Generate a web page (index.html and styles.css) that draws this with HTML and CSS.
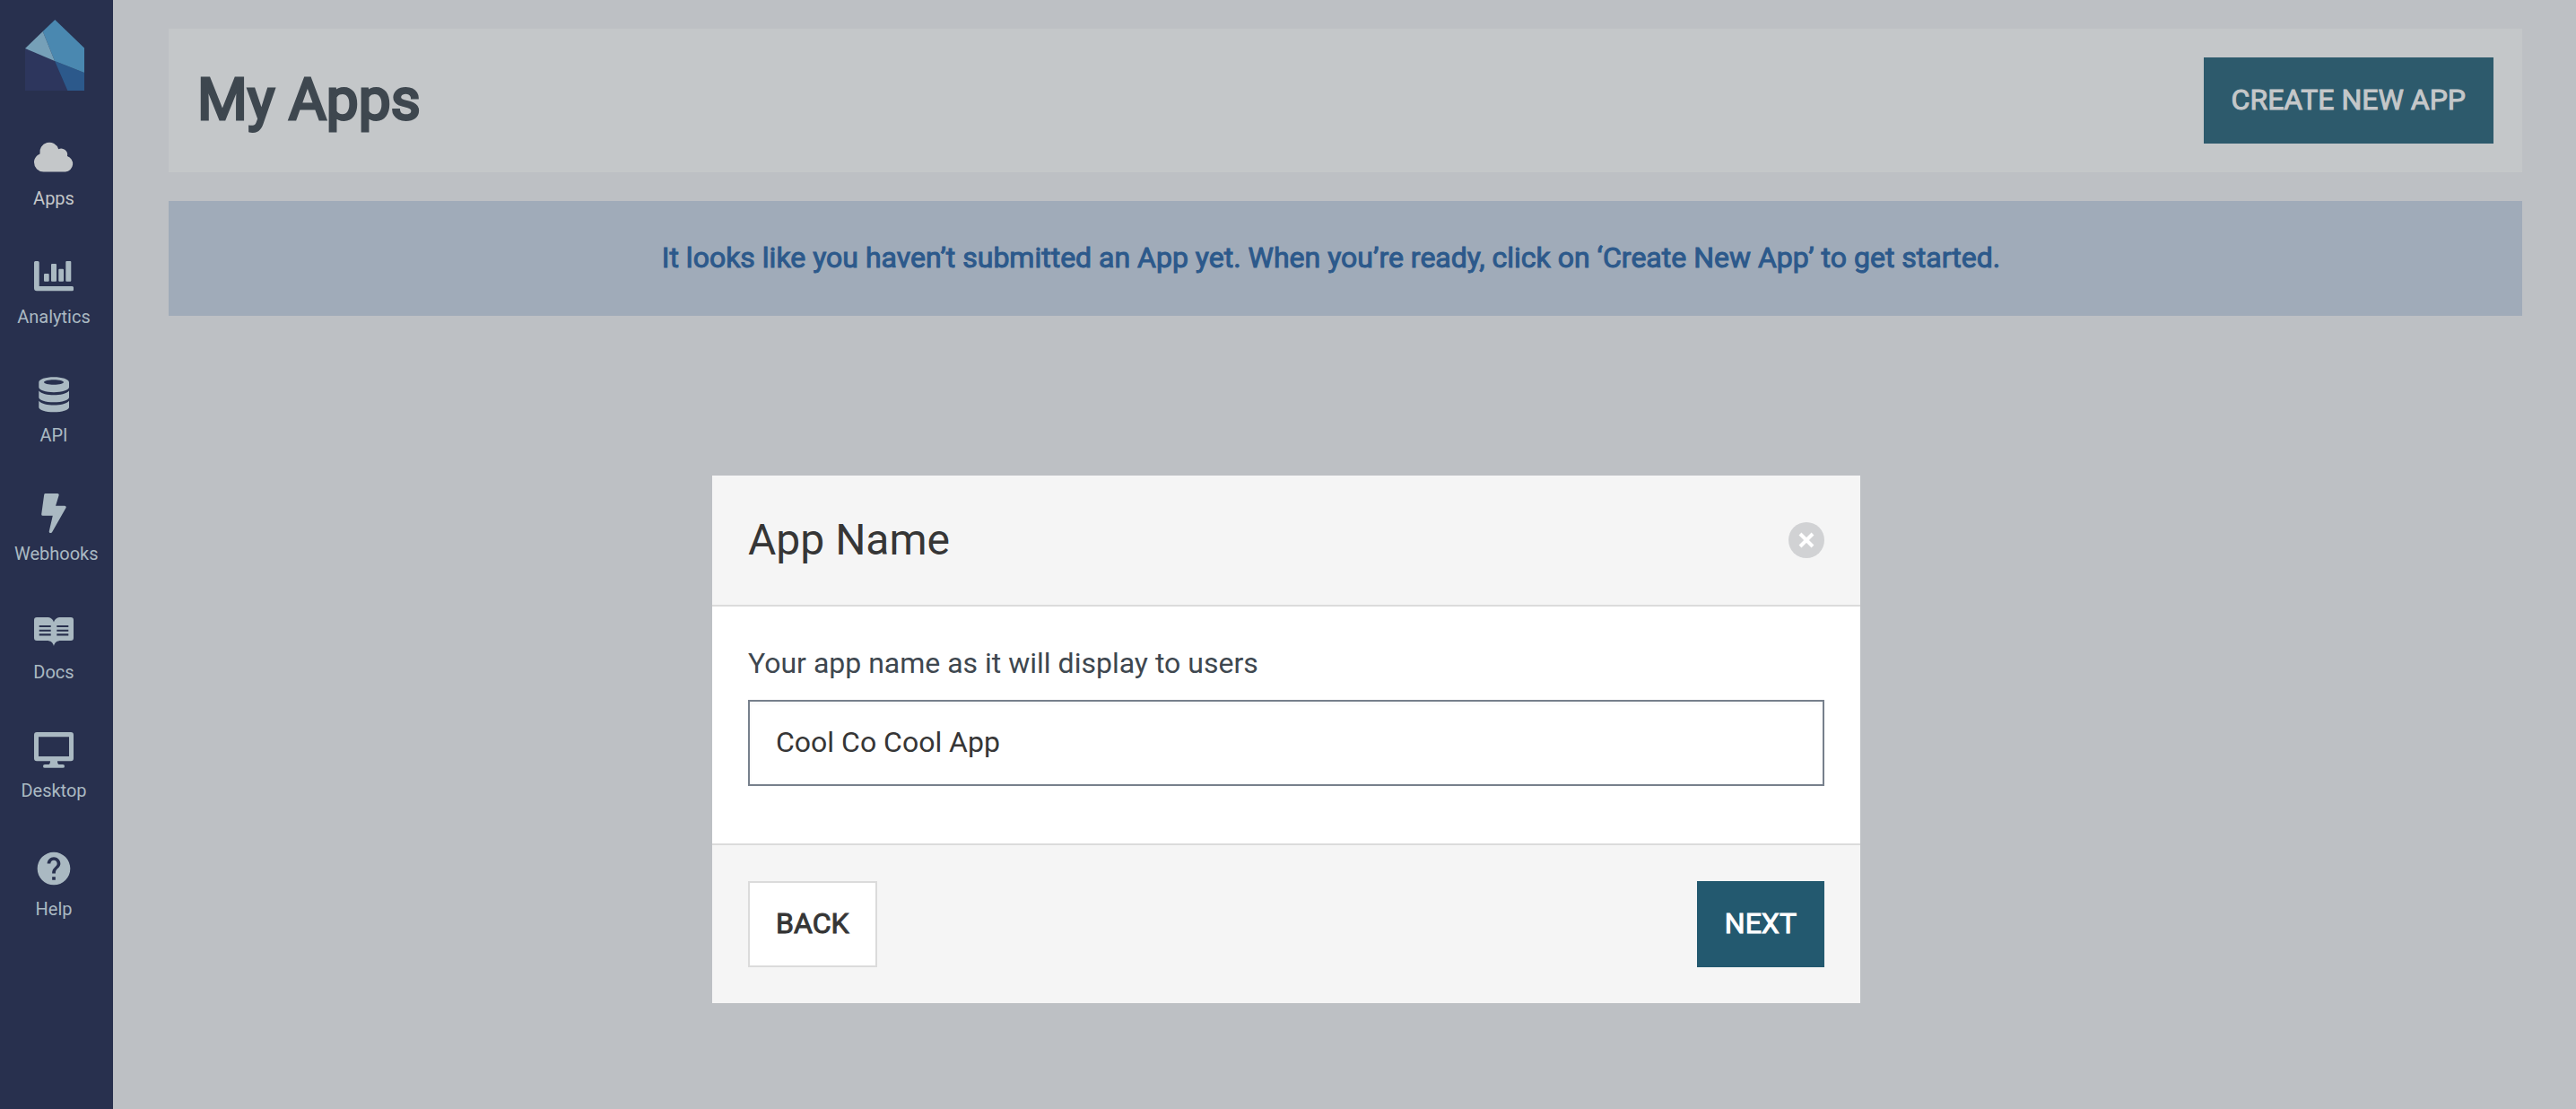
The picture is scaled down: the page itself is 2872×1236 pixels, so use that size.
FILE: index.html
```html
<!DOCTYPE html>
<html lang="en">
<head>
<meta charset="utf-8">
<meta name="viewport" content="width=device-width, initial-scale=1">
<title>My Apps</title>
<link rel="stylesheet" href="styles.css">
</head>
<body>
<div class="layout">
  <nav class="sidebar" aria-label="Main">
    <a class="logo" href="#" aria-label="Home">
      <svg viewBox="0 0 66 79" aria-hidden="true">
        <path fill="#2d365d" d="M0 32 33 46 47.300 79H0z"/>
        <path fill="#2c598b" d="M33 46 66 59V79H47.300z"/>
        <path fill="#4a88b0" d="M19.700 13 33.300 0 66 31.500V59L33 46z"/>
        <path fill="#76a0b8" d="M0 32 19.700 13 33 46z"/>
      </svg>
    </a>
    <ul class="menu">
      <li><a class="item active" href="#">
        <svg viewBox="0 0 44 44" aria-hidden="true"><path d="M10.500 37.500A10.500 10.500 0 0 1 0 27C0 22.500 2.800 19 6.500 17.500A10.700 10.700 0 0 1 27.200 12.200 7 7 0 0 1 37 20 9 9 0 0 1 35 37.500z"/></svg>
        <span>Apps</span></a></li>
      <li><a class="item" href="#">
        <svg viewBox="0 0 44 44" aria-hidden="true"><path d="M1.500 5h2.700q1.500 0 1.500 1.500V33h36.800q1.500 0 1.500 1.500v2.300q0 1.500-1.500 1.500H3q-3 0-3-3V6.500Q0 5 1.500 5z"/><rect x="11" y="19" width="5.700" height="8.700" rx="1"/><rect x="19" y="8" width="6" height="19.700" rx="1"/><rect x="27.300" y="13.700" width="5.700" height="14" rx="1"/><rect x="35.300" y="5" width="6" height="22.700" rx="1"/></svg>
        <span>Analytics</span></a></li>
      <li><a class="item" href="#">
        <svg viewBox="0 0 44 44" aria-hidden="true"><path fill-rule="evenodd" d="M5.300 8C5.300 4.700 13 2.300 22 2.300S39 4.700 39 8v5.500c0 3.300-8 5.700-17 5.700s-16.700-2.400-16.700-5.700zM22 5.300c-6 0-11 1.200-11 2.700s5 2.700 11 2.700S33 9.500 33 8 28 5.300 22 5.300z"/><path d="M5.300 17.500c3 3.500 9.700 4.700 16.700 4.700s14-1.200 17-4.700V25c0 3-8 5.300-17 5.300S5.300 28 5.300 25zM5.300 28.700c3 3.500 9.700 4.700 16.700 4.700s14-1.200 17-4.700V36c0 3-8 5.300-17 5.300S5.300 39 5.300 36z"/></svg>
        <span>API</span></a></li>
      <li><a class="item" href="#">
        <svg viewBox="0 0 44 44" aria-hidden="true"><path stroke="currentColor" stroke-width="3" stroke-linejoin="round" d="M12.700 1.500H26.200L22 15.200H34.200L18.700 42.500H18.200L22.700 23.200H9.700z"/></svg>
        <span>Webhooks</span></a></li>
      <li><a class="item" href="#">
        <svg viewBox="0 0 44 44" aria-hidden="true"><path fill-rule="evenodd" d="M3 6h11c4.500 0 7 2 8 5.500C23 8 25.500 6 30 6h11q3 0 3 3v20q0 3-3 3H30c-4.500 0-7 2-8 6-1-4-3.500-6-8-6H3q-3 0-3-3V9q0-3 3-3zM5.700 15v2h13v-2zm0 4.700v2h13v-2zm0 4.600v2.200h13v-2.200zM25.300 15v2h13v-2zm0 4.700v2h13v-2zm0 4.600v2.200h13v-2.200z"/></svg>
        <span>Docs</span></a></li>
      <li><a class="item" href="#">
        <svg viewBox="0 0 44 44" aria-hidden="true"><path fill-rule="evenodd" d="M3 2h38q3 0 3 3v26.300q0 3-3 3H26c0 2 .5 3.200 1.500 3.700H32q2 0 2 1.900T32 41.800H12q-2 0-2-1.900T12 38h4.500c1-.500 1.500-1.700 1.500-3.700H3q-3 0-3-3V5q0-3 3-3zM5 7.300V29h34V7.300z"/></svg>
        <span>Desktop</span></a></li>
      <li><a class="item" href="#">
        <svg viewBox="0 0 24 24" aria-hidden="true"><path d="M12 2C6.480 2 2 6.480 2 12s4.480 10 10 10 10-4.480 10-10S17.520 2 12 2zm1 17h-2v-2h2v2zm2.070-7.750l-.9.920C13.450 12.900 13 13.500 13 15h-2v-.5c0-1.100.45-2.100 1.170-2.830l1.240-1.260c.37-.36.59-.86.59-1.410 0-1.100-.9-2-2-2s-2 .9-2 2H8c0-2.210 1.790-4 4-4s4 1.790 4 4c0 .88-.36 1.680-.93 2.250z"/></svg>
        <span>Help</span></a></li>
    </ul>
  </nav>

  <main class="content">
    <header class="page-header">
      <h1>My Apps</h1>
      <button type="button" class="button create">CREATE NEW APP</button>
    </header>
    <p class="notice">It looks like you haven’t submitted an App yet. When you’re ready, click on ‘Create New App’ to get started.</p>
  </main>
</div>

<div class="overlay">
  <form class="modal" role="dialog" aria-modal="true" aria-labelledby="modal-title">
    <header class="modal-header">
      <h2 id="modal-title">App Name</h2>
      <button type="button" class="close" aria-label="Close">
        <svg viewBox="0 0 40 40" aria-hidden="true"><circle cx="20" cy="20" r="20" fill="#d1d2d4"/><path d="M13 13 27 27M27 13 13 27" stroke="#fff" stroke-width="4"/></svg>
      </button>
    </header>
    <div class="modal-body">
      <label for="app-name">Your app name as it will display to users</label>
      <input id="app-name" type="text" value="Cool Co Cool App">
    </div>
    <footer class="modal-footer">
      <button type="button" class="button back">BACK</button>
      <button type="submit" class="button next">NEXT</button>
    </footer>
  </form>
</div>
</body>
</html>
```
FILE: styles.css
```css
* {
  box-sizing: border-box;
}

body {
  margin: 0;
  background: #bdc0c4;
  color: #3e474f;
  font-family: Roboto, "Liberation Sans", sans-serif;
  font-size: 32px;
  line-height: 40px;
}

h1,
h2,
p,
ul {
  margin: 0;
  padding: 0;
}

.layout {
  display: flex;
  min-height: 100vh;
}

/* Sidebar */
.sidebar {
  flex: none;
  width: 126px;
  padding: 22px 22px 22px 16px;
  background: #28304e;
}

.logo {
  display: block;
  width: 66px;
  margin: 0 auto 53px 12px;
}

.logo svg,
.item svg,
.close svg {
  display: block;
}

.menu {
  display: flex;
  flex-direction: column;
  gap: 52px;
  list-style: none;
}

.item {
  display: block;
  color: #aab9c2;
  font-size: 20px;
  line-height: 26px;
  text-align: center;
  text-decoration: none;
}

.item.active {
  color: #c4c7c9;
}

.item svg {
  width: 44px;
  height: 44px;
  margin: 0 auto 10px;
  fill: currentColor;
}

/* Page */
.content {
  flex: 1;
  padding: 32px 60px 32px 62px;
}

.page-header {
  display: flex;
  align-items: center;
  justify-content: space-between;
  padding: 32px;
  background: #c4c7c9;
}

h1 {
  font-size: 64px;
  line-height: 80px;
  font-weight: 400;
  -webkit-text-stroke: 3px;
}

.notice {
  margin-top: 32px;
  padding: 43px 80px 45px 48px;
  background: #a0abb9;
  color: #2c598b;
  text-align: center;
  -webkit-text-stroke: 1px;
}

.button {
  height: 96px;
  padding: 0 29px 2px;
  border: 2px solid;
  border-radius: 0;
  font: inherit;
  -webkit-text-stroke: 1px;
}

.create {
  border-color: #2d5a6c;
  background: #2d5a6c;
  color: #c4c7c9;
}

/* Dialog */
.overlay {
  position: absolute;
  top: 0;
  left: 0;
  right: 4px;
  display: flex;
  justify-content: center;
  padding-top: 530px;
}

.modal {
  width: 1280px;
  background: #fff;
  color: #363636;
}

.modal-header,
.modal-footer {
  display: flex;
  align-items: center;
  justify-content: space-between;
  padding: 40px;
  background: #f5f5f5;
}

.modal-header {
  border-bottom: 2px solid #dbdbdb;
}

.modal-footer {
  border-top: 2px solid #dbdbdb;
}

h2 {
  font-size: 48px;
  line-height: 64px;
  font-weight: 400;
}

.close {
  width: 40px;
  height: 40px;
  padding: 0;
  border: 0;
  background: none;
}

.modal-body {
  display: flex;
  flex-direction: column;
  gap: 21px;
  padding: 43px 40px 64px;
}

.modal-body label {
  color: #3e474f;
}

.modal-body input {
  height: 96px;
  padding: 0 29px 2px;
  border: 2px solid #77808c;
  border-radius: 0;
  background: #fff;
  box-shadow: inset 0 2px 4px rgba(10, 10, 10, 0.04);
  color: #363636;
  font: inherit;
}

.back {
  border-color: #dbdbdb;
  background: #fff;
  color: #363636;
}

.next {
  border-color: #23596f;
  background: #23596f;
  color: #fff;
}
```
